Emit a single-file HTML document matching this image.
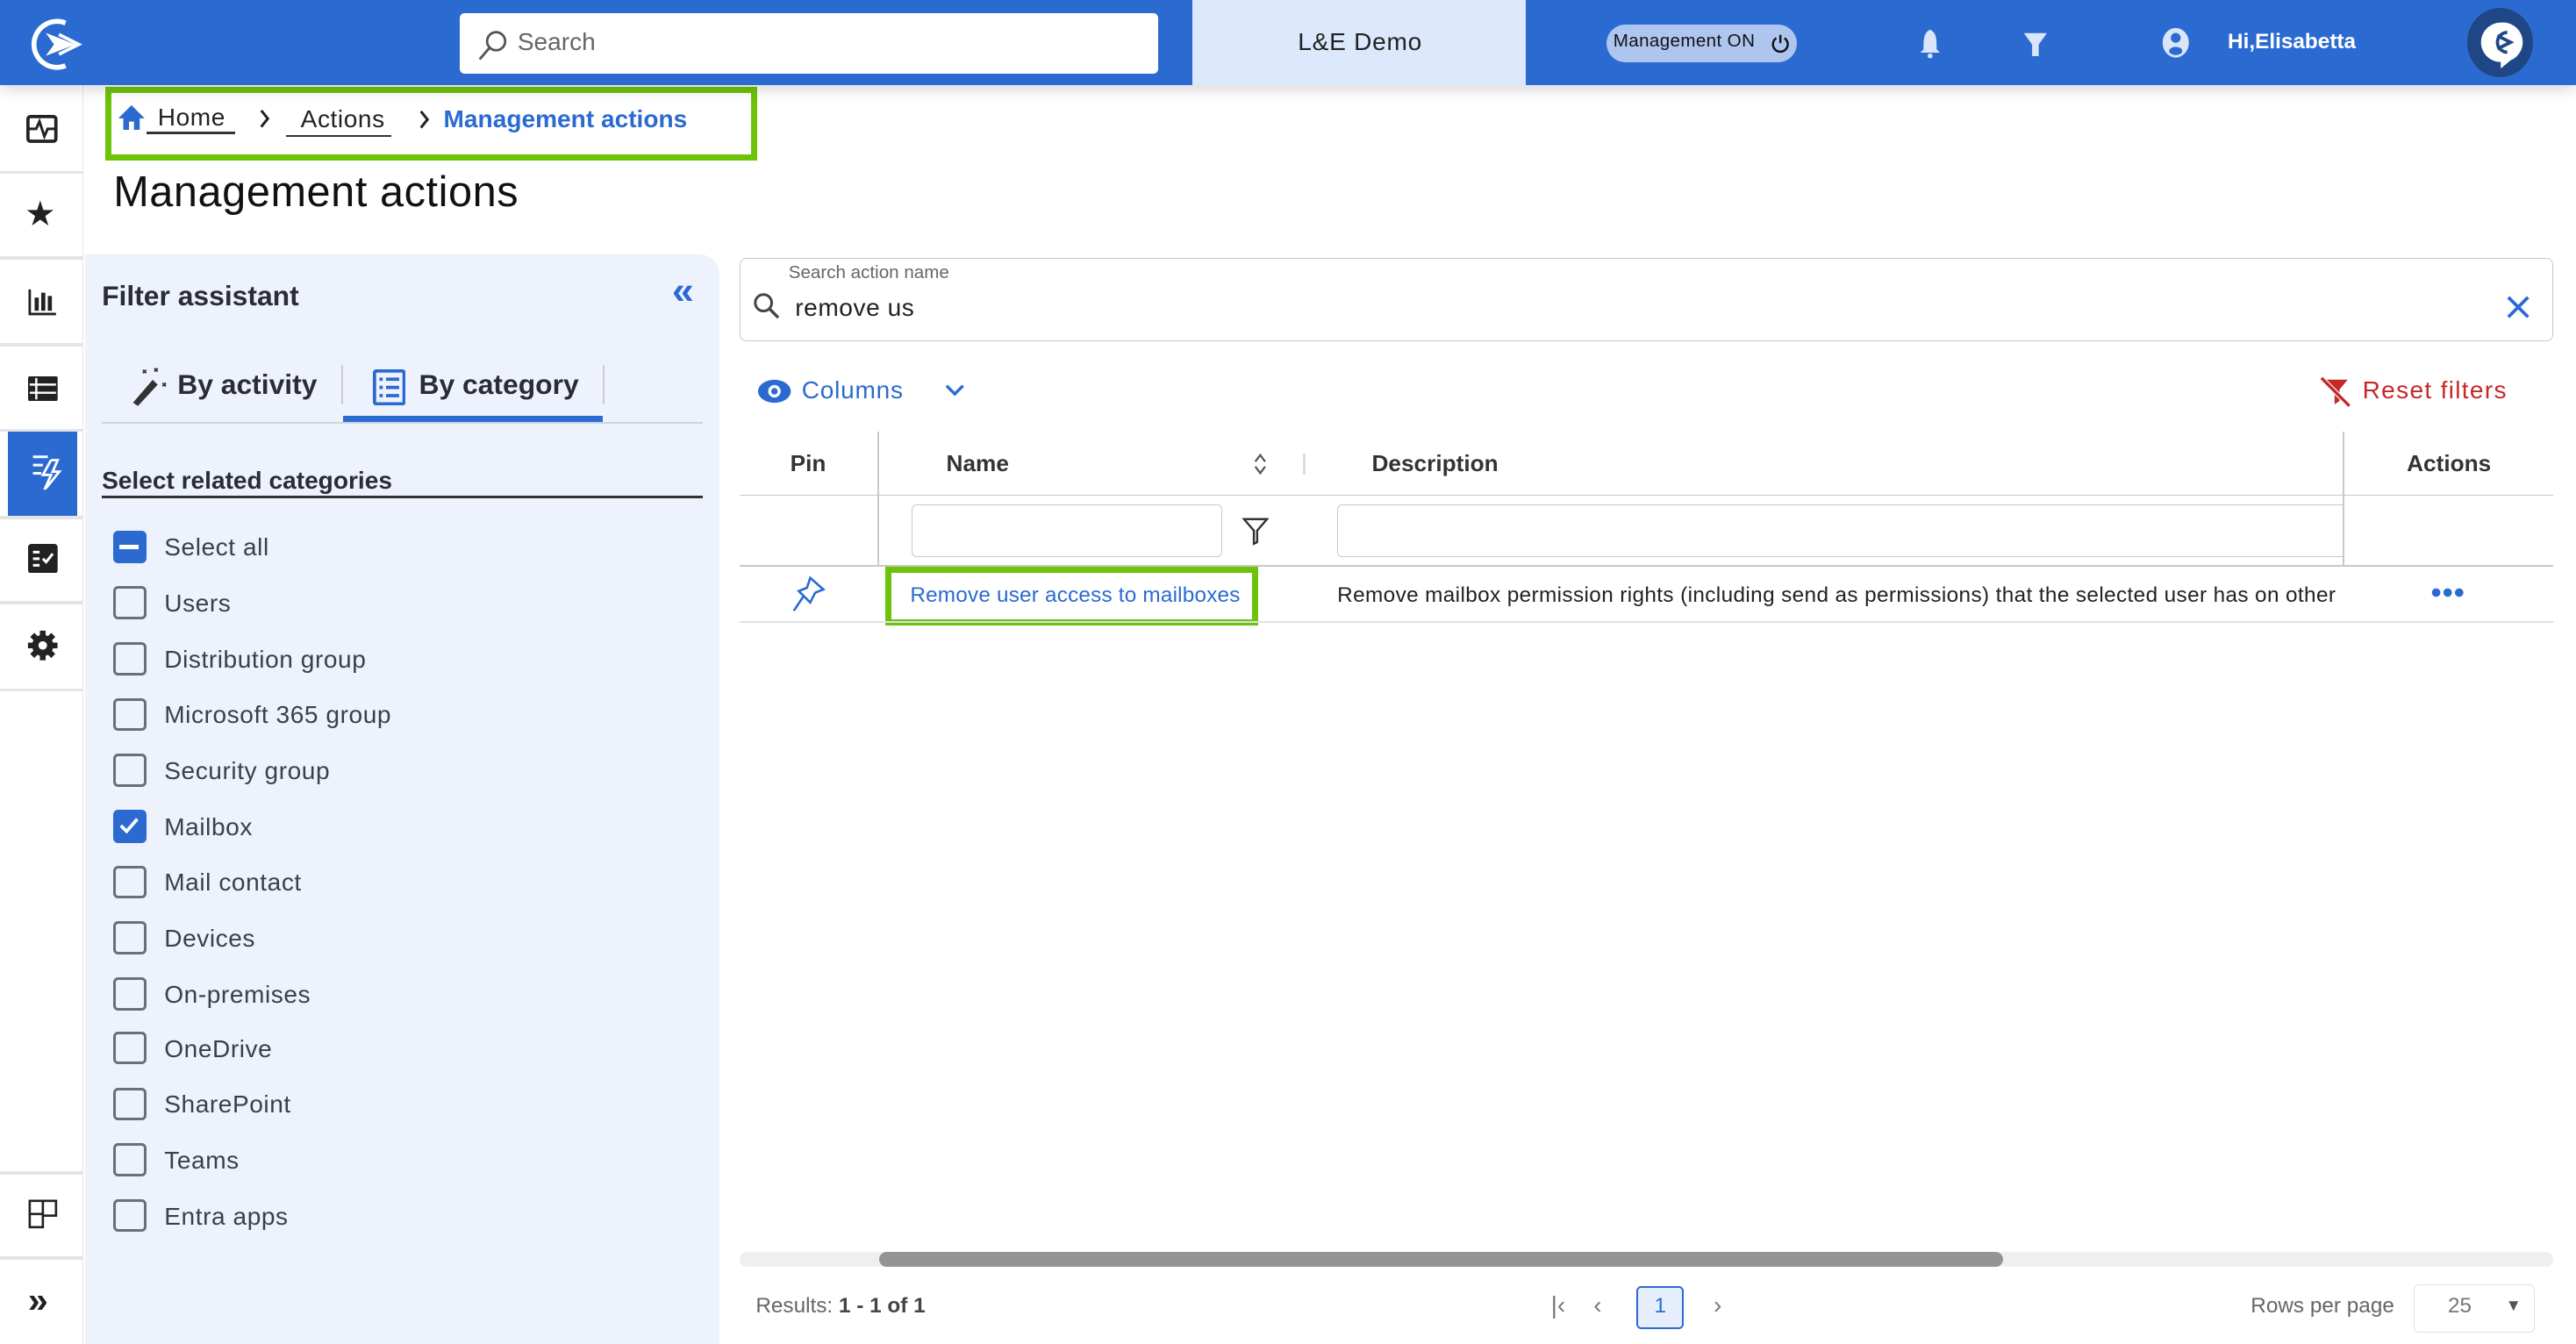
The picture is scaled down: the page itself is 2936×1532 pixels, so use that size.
<!DOCTYPE html>
<html><head><meta charset="utf-8"><style>
*{box-sizing:border-box;margin:0;padding:0}
html,body{width:2936px;height:1532px;overflow:hidden;background:#fff}
#r{zoom:1.87245;width:1568px;height:818px;position:relative;font-family:"Liberation Sans",sans-serif;color:#222}
.a{position:absolute}
.t{position:absolute;white-space:nowrap;line-height:1}
.hdr{left:0;top:0;width:1568px;height:52px;background:#2b6bd1;box-shadow:0 3px 8px rgba(0,0,0,.15);z-index:2}
.side{left:0;top:52px;width:51px;height:766px;background:#fff;border-right:1px solid #e6e6e6}
.sep{position:absolute;left:0;width:51px;height:2px;background:#e4e4e4}
.cb{position:absolute;left:69px;width:20px;height:20px;border:2px solid #6b6f78;border-radius:3px}
.cl{position:absolute;left:100px;font-size:15px;color:#3b3f48;line-height:1;letter-spacing:.3px}
.hl{position:absolute;height:1px;background:#c8c8c8}
</style></head><body><div id="r">
<div class="a hdr"></div>
<svg class="a" style="left:14px;top:8px;z-index:3" width="40" height="38" viewBox="0 0 40 38"><path d="M26 6 A14 14 0 1 0 26 32" fill="none" stroke="#fff" stroke-width="3"/><path d="M14 12 L32 19 L14 26 L19 19Z" fill="#fff"/><path d="M22 13 L34 19 L22 25" fill="none" stroke="#fff" stroke-width="2"/></svg>
<div class="a" style="left:280px;top:8px;width:425px;height:37px;background:#fff;border-radius:3px;z-index:3"></div>
<svg class="a" style="left:290px;top:17px;z-index:3" width="20" height="20" viewBox="0 0 20 20"><circle cx="12" cy="8" r="5.5" fill="none" stroke="#555" stroke-width="1.5"/><path d="M8 12 L2 19" stroke="#555" stroke-width="1.5"/></svg>
<div class="t" style="left:315px;top:18px;font-size:15px;color:#666;z-index:3">Search</div>
<div class="a" style="left:726px;top:0;width:203px;height:52px;background:#dce8fb;z-index:3"></div>
<div class="t" style="left:790px;top:18px;font-size:15px;color:#222;z-index:3;letter-spacing:.4px">L&amp;E Demo</div>
<div class="a" style="left:978px;top:15px;width:116px;height:23px;background:#aec5ef;border-radius:12px;z-index:3"></div>
<div class="t" style="left:982px;top:20px;font-size:11px;color:#111;z-index:3;letter-spacing:.2px">Management ON</div>
<svg class="a" style="left:1077px;top:19px;z-index:3" width="13" height="14" viewBox="0 0 13 14"><path d="M4 4 A4.5 4.5 0 1 0 9 4" fill="none" stroke="#111" stroke-width="1.3"/><path d="M6.5 2 V7" stroke="#111" stroke-width="1.3"/></svg>
<svg class="a" style="left:1166px;top:16px;z-index:3" width="18" height="22" viewBox="0 0 18 22"><path d="M9 2 C5 4 5 8 5 14 L3 16 H15 L13 14 C13 8 13 4 9 2Z" fill="#dbe5fa"/><circle cx="9" cy="18" r="1.5" fill="#dbe5fa"/></svg>
<svg class="a" style="left:1230px;top:18px;z-index:3" width="18" height="18" viewBox="0 0 18 18"><path d="M2 2 H16 L11 9 V16 H7 V9Z" fill="#dbe5fa"/></svg>
<svg class="a" style="left:1315px;top:16px;z-index:3" width="19" height="20" viewBox="0 0 19 20"><ellipse cx="9.5" cy="10" rx="8" ry="9" fill="#dbe5fa"/><circle cx="9.5" cy="7" r="3" fill="#2b6bd1"/><ellipse cx="9.5" cy="15" rx="4" ry="2.5" fill="#2b6bd1"/></svg>
<div class="t" style="left:1356px;top:19px;font-size:13px;color:#fff;font-weight:bold;z-index:3">Hi,Elisabetta</div>
<div class="a" style="left:1502px;top:5px;width:40px;height:42px;border-radius:50%;background:#1f4785;z-index:3"></div>
<svg class="a" style="left:1508px;top:12px;z-index:3" width="28" height="30" viewBox="0 0 28 30"><path d="M14 2 A12 12 0 1 0 14 26 L14 30 L20 25 A12 12 0 0 0 14 2Z" fill="#fff"/><path d="M18 8 A6 6 0 1 0 18 20" fill="none" stroke="#1f4785" stroke-width="2"/><path d="M12 10 L20 14 L12 18" fill="none" stroke="#1f4785" stroke-width="2"/></svg>

<div class="a side"></div>
<div class="sep" style="top:104px"></div><div class="sep" style="top:156px"></div><div class="sep" style="top:209px"></div><div class="sep" style="top:261px"></div><div class="sep" style="top:314px"></div><div class="sep" style="top:366px"></div><div class="sep" style="top:419px"></div><div class="sep" style="top:713px"></div><div class="sep" style="top:765px"></div>
<svg class="a" style="left:16px;top:70px" width="19" height="18" viewBox="0 0 19 18"><rect x="1" y="1" width="17" height="15" rx="1.5" fill="none" stroke="#222" stroke-width="2"/><path d="M1 8.5 H6 L8 4 L11 13 L13 8.5 H18" fill="none" stroke="#222" stroke-width="1.6"/></svg>
<div class="t" style="left:15px;top:120px;font-size:21px;color:#222">★</div>
<svg class="a" style="left:17px;top:175px" width="18" height="17" viewBox="0 0 18 17"><path d="M1 1 V16 H17" fill="none" stroke="#222" stroke-width="1.5"/><rect x="4" y="6" width="2.5" height="8" fill="#222"/><rect x="8" y="3" width="2.5" height="11" fill="#222"/><rect x="12" y="5" width="2.5" height="9" fill="#222"/></svg>
<svg class="a" style="left:17px;top:229px" width="18" height="15" viewBox="0 0 18 15"><rect x="0" y="0" width="18" height="15" rx="1" fill="#222"/><path d="M5 1 V14 M1 5 H17 M1 10 H17" stroke="#fff" stroke-width="1.3"/></svg>
<div class="a" style="left:5px;top:263px;width:42px;height:51px;background:#2b6bd1"></div>
<svg class="a" style="left:17px;top:276px" width="22" height="24" viewBox="0 0 22 24"><path d="M3 2 H12 M3 7 H9 M3 12 H8" stroke="#fff" stroke-width="1.6"/><path d="M14 4 L9 13 H14 L10 22 M14 4 H18 L15 11 H19 L11 21" fill="none" stroke="#fff" stroke-width="1.5"/></svg>
<svg class="a" style="left:17px;top:331px" width="18" height="18" viewBox="0 0 18 18"><rect width="18" height="18" rx="2" fill="#222"/><path d="M3 5 H7 M3 9 H7 M3 13 H7" stroke="#fff" stroke-width="1.6"/><path d="M9 9 L11 11 L15 6" fill="none" stroke="#fff" stroke-width="1.6"/></svg>
<svg class="a" style="left:16px;top:383px" width="20" height="20" viewBox="0 0 20 20"><circle cx="10" cy="10" r="6.5" fill="#222"/><path d="M10 1 V19 M1 10 H19 M3.6 3.6 L16.4 16.4 M16.4 3.6 L3.6 16.4" stroke="#222" stroke-width="3.5"/><circle cx="10" cy="10" r="2.6" fill="#fff"/></svg>
<svg class="a" style="left:17px;top:730px" width="18" height="18" viewBox="0 0 18 18"><path d="M1 1 H17 V10 H9 V17 H1 Z M9 1 V10 M1 9 H9" fill="none" stroke="#222" stroke-width="1.4"/></svg>
<div class="t" style="left:17px;top:781px;font-size:22px;font-weight:bold;color:#222">»</div>

<div class="a" style="left:64px;top:53px;width:397px;height:45px;border:4px solid #6cc30a"></div>
<svg class="a" style="left:71px;top:63px" width="18" height="17" viewBox="0 0 18 17"><path d="M9 1 L17 9 H14 V16 H10.5 V11 H7.5 V16 H4 V9 H1Z" fill="#2b6bd1"/></svg>
<div class="t" style="left:96px;top:64px;font-size:15px;color:#222;letter-spacing:.3px">Home</div>
<div class="a" style="left:89px;top:80px;width:54px;height:1.5px;background:#333"></div>
<svg class="a" style="left:157px;top:66px" width="8" height="12" viewBox="0 0 8 12"><path d="M2 1 L6 6 L2 11" fill="none" stroke="#222" stroke-width="1.6"/></svg>
<div class="t" style="left:183px;top:65px;font-size:15px;color:#222;letter-spacing:.3px">Actions</div>
<div class="a" style="left:174px;top:82px;width:64px;height:1.5px;background:#333"></div>
<svg class="a" style="left:254px;top:67px" width="8" height="12" viewBox="0 0 8 12"><path d="M2 1 L6 6 L2 11" fill="none" stroke="#222" stroke-width="1.6"/></svg>
<div class="t" style="left:270px;top:65px;font-size:15px;color:#2b6bd1;font-weight:bold">Management actions</div>
<div class="t" style="left:69px;top:104px;font-size:26px;color:#111;letter-spacing:.3px">Management actions</div>

<div class="a" style="left:52px;top:155px;width:386px;height:663px;background:#eef2fd;border-top-right-radius:12px"></div>
<div class="t" style="left:62px;top:172px;font-size:17px;font-weight:bold;color:#2a2d33">Filter assistant</div>
<div class="t" style="left:409px;top:165px;font-size:24px;font-weight:bold;color:#2b6bd1">«</div>
<svg class="a" style="left:78px;top:222px" width="26" height="26" viewBox="0 0 26 26"><path d="M3 23 L15 9 L18 12 L6 25Z" fill="#333"/><path d="M9 3 L11 5 M11 3 L9 5 M16 2 L18 4 M18 2 L16 4 M21 11 L23 13 M23 11 L21 13" stroke="#333" stroke-width="1"/></svg>
<div class="t" style="left:108px;top:226px;font-size:17px;font-weight:bold;color:#2a2d33">By activity</div>
<div class="a" style="left:208px;top:222px;width:1px;height:24px;background:#ccd"></div>
<svg class="a" style="left:227px;top:225px" width="20" height="22" viewBox="0 0 20 22"><rect x="1" y="1" width="18" height="20" rx="1" fill="none" stroke="#2b6bd1" stroke-width="2"/><path d="M4 6 H6 M8 6 H16 M4 11 H6 M8 11 H16 M4 16 H6 M8 16 H16" stroke="#2b6bd1" stroke-width="2"/></svg>
<div class="t" style="left:255px;top:226px;font-size:17px;font-weight:bold;color:#2a2d33">By category</div>
<div class="a" style="left:367px;top:222px;width:1px;height:24px;background:#ccd"></div>
<div class="a" style="left:62px;top:257px;width:366px;height:1px;background:#cfd3dc"></div>
<div class="a" style="left:209px;top:253px;width:158px;height:4px;background:#2b6bd1"></div>
<div class="t" style="left:62px;top:285px;font-size:15px;font-weight:bold;color:#2a2d33">Select related categories</div>
<div class="a" style="left:62px;top:302px;width:366px;height:1.5px;background:#333"></div>

<div class="cb" style="top:323px;background:#2b6bd1;border-color:#2b6bd1"><div style="position:absolute;left:2px;top:7px;width:12px;height:2.5px;background:#fff"></div></div><div class="cl" style="top:326px">Select all</div>
<div class="cb" style="top:357px"></div><div class="cl" style="top:360px">Users</div>
<div class="cb" style="top:391px"></div><div class="cl" style="top:394px">Distribution group</div>
<div class="cb" style="top:425px"></div><div class="cl" style="top:428px">Microsoft 365 group</div>
<div class="cb" style="top:459px"></div><div class="cl" style="top:462px">Security group</div>
<div class="cb" style="top:493px;background:#2b6bd1;border-color:#2b6bd1"><svg style="position:absolute;left:1px;top:1px" width="14" height="14" viewBox="0 0 14 14"><path d="M2 7 L5.5 10.5 L12 3" fill="none" stroke="#fff" stroke-width="2"/></svg></div><div class="cl" style="top:496px">Mailbox</div>
<div class="cb" style="top:527px"></div><div class="cl" style="top:530px">Mail contact</div>
<div class="cb" style="top:561px"></div><div class="cl" style="top:564px">Devices</div>
<div class="cb" style="top:595px"></div><div class="cl" style="top:598px">On-premises</div>
<div class="cb" style="top:628px"></div><div class="cl" style="top:631px">OneDrive</div>
<div class="cb" style="top:662px"></div><div class="cl" style="top:665px">SharePoint</div>
<div class="cb" style="top:696px"></div><div class="cl" style="top:699px">Teams</div>
<div class="cb" style="top:730px"></div><div class="cl" style="top:733px">Entra apps</div>

<div class="a" style="left:450px;top:157px;width:1104px;height:51px;border:1px solid #c8c8c8;border-radius:4px"></div>
<div class="t" style="left:480px;top:161px;font-size:11px;color:#666">Search action name</div>
<svg class="a" style="left:458px;top:178px" width="17" height="17" viewBox="0 0 17 17"><circle cx="6.5" cy="6.5" r="5" fill="none" stroke="#444" stroke-width="1.6"/><path d="M10 10 L15.5 15.5" stroke="#444" stroke-width="1.8"/></svg>
<div class="t" style="left:484px;top:180px;font-size:15px;color:#222;letter-spacing:.3px">remove us</div>
<svg class="a" style="left:1526px;top:180px" width="14" height="14" viewBox="0 0 14 14"><path d="M1 1 L13 13 M13 1 L1 13" stroke="#2b6bd1" stroke-width="2"/></svg>

<svg class="a" style="left:461px;top:230px" width="21" height="16" viewBox="0 0 21 16"><ellipse cx="10.5" cy="8" rx="10" ry="7" fill="#2b6bd1"/><circle cx="10.5" cy="8" r="3.8" fill="#fff"/><circle cx="10.5" cy="8" r="2" fill="#2b6bd1"/></svg>
<div class="t" style="left:488px;top:230px;font-size:15px;color:#2b6bd1;letter-spacing:.4px">Columns</div>
<svg class="a" style="left:575px;top:233px" width="12" height="10" viewBox="0 0 12 10"><path d="M1 2 L6 7 L11 2" fill="none" stroke="#2b6bd1" stroke-width="1.8"/></svg>
<svg class="a" style="left:1412px;top:229px" width="20" height="19" viewBox="0 0 20 19"><path d="M3 2 H17 L12 8 V15 L9 17 V8Z" fill="#c62828"/><path d="M1 1 L18 18" stroke="#fff" stroke-width="3"/><path d="M1 1 L18 18" stroke="#c62828" stroke-width="1.8"/></svg>
<div class="t" style="left:1438px;top:230px;font-size:15px;color:#c62828;letter-spacing:.7px">Reset filters</div>

<div class="t" style="left:481px;top:275px;font-size:14px;font-weight:bold;color:#333">Pin</div>
<div class="t" style="left:576px;top:275px;font-size:14px;font-weight:bold;color:#333">Name</div>
<svg class="a" style="left:762px;top:275px" width="10" height="15" viewBox="0 0 10 15"><path d="M2 6 L5 2 L8 6 M2 9 L5 13 L8 9" fill="none" stroke="#555" stroke-width="1.2"/></svg>
<div class="a" style="left:793px;top:276px;width:1.5px;height:13px;background:#ddd"></div>
<div class="t" style="left:835px;top:275px;font-size:14px;font-weight:bold;color:#333">Description</div>
<div class="t" style="left:1465px;top:275px;font-size:14px;font-weight:bold;color:#333">Actions</div>
<div class="a" style="left:534px;top:263px;width:1px;height:82px;background:#c8c8c8"></div>
<div class="a" style="left:1426px;top:263px;width:1px;height:82px;background:#c8c8c8"></div>
<div class="hl" style="left:450px;top:301px;width:1104px"></div>
<div class="hl" style="left:450px;top:344px;width:1104px"></div>
<div class="a" style="left:555px;top:307px;width:189px;height:32px;border:1px solid #c8c8c8;border-radius:3px"></div>
<svg class="a" style="left:756px;top:314px" width="16" height="18" viewBox="0 0 16 18"><path d="M1 2 H15 L9 9 V16 L7 17 V9Z" fill="none" stroke="#333" stroke-width="1.3"/></svg>
<div class="a" style="left:814px;top:307px;width:613px;height:32px;border:1px solid #c8c8c8;border-right:none;border-radius:3px 0 0 3px"></div>
<svg class="a" style="left:481px;top:350px" width="22" height="24" viewBox="0 0 22 24"><path d="M12 2 L20 9 L15 11 L12 17 L5 10 L10 8Z M8 13 L2 22" fill="none" stroke="#2b6bd1" stroke-width="1.4"/></svg>
<div class="a" style="left:539px;top:345px;width:227px;height:36px;border:4px solid #6cc30a"></div>
<div class="t" style="left:554px;top:356px;font-size:13px;color:#2b6bd1;letter-spacing:.1px">Remove user access to mailboxes</div>
<div class="t" style="left:814px;top:356px;font-size:13px;color:#222;letter-spacing:.2px">Remove mailbox permission rights (including send as permissions) that the selected user has on other</div>
<svg class="a" style="left:1480px;top:357px" width="20" height="8" viewBox="0 0 20 8"><circle cx="3" cy="4" r="2.6" fill="#2b6bd1"/><circle cx="10" cy="4" r="2.6" fill="#2b6bd1"/><circle cx="17" cy="4" r="2.6" fill="#2b6bd1"/></svg>
<div class="a" style="left:450px;top:378px;width:1104px;height:1px;background:#dde0e6"></div>

<div class="a" style="left:450px;top:762px;width:1104px;height:9px;background:#efeef0;border-radius:5px"></div>
<div class="a" style="left:535px;top:762px;width:684px;height:9px;background:#959395;border-radius:5px"></div>
<div class="t" style="left:460px;top:789px;font-size:13px;color:#666">Results: <b style="color:#444">1 - 1 of 1</b></div>
<div class="t" style="left:944px;top:787px;font-size:15px;color:#777">|‹</div>
<div class="t" style="left:970px;top:787px;font-size:15px;color:#777">‹</div>
<div class="a" style="left:996px;top:783px;width:29px;height:26px;border:1.5px solid #2b6bd1;border-radius:3px;background:#e6eefb"></div>
<div class="t" style="left:1007px;top:789px;font-size:13px;color:#2b6bd1">1</div>
<div class="t" style="left:1043px;top:787px;font-size:15px;color:#777">›</div>
<div class="t" style="left:1370px;top:789px;font-size:13px;color:#666">Rows per page</div>
<div class="a" style="left:1469px;top:782px;width:74px;height:29px;border:1px solid #e0e0e0;border-radius:3px;background:#fff"></div>
<div class="t" style="left:1490px;top:789px;font-size:13px;color:#777">25</div>
<div class="t" style="left:1525px;top:790px;font-size:10px;color:#555">▼</div>
</div></body></html>
